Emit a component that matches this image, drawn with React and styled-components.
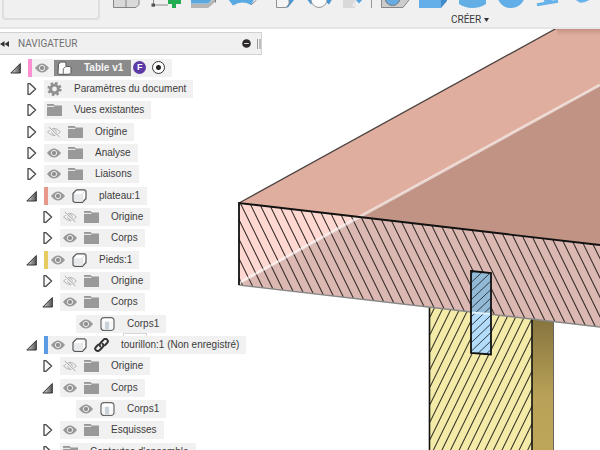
import React, { useState } from 'react';
import styled, { createGlobalStyle } from 'styled-components';

const GlobalStyle = createGlobalStyle`
    * {
        box-sizing: border-box;
    }

    body {
        margin: 0;
        background: #fff;
        font-family: "Liberation Sans", Arial, sans-serif;
    }

    button {
        padding: 0;
        border: 0;
        background: none;
        font: inherit;
        color: inherit;
    }

    svg {
        display: block;
    }
`;

const Page = styled.div`
    height: 100vh;
    display: flex;
    flex-direction: column;
    overflow: hidden;
`;

/* ---------- toolbar ---------- */

const Toolbar = styled.header`
    flex: none;
    display: flex;
    height: 29px;
    padding-left: 2px;
    overflow: hidden;
    background: #f0f0f0;
    border-bottom: 2px solid #e6e6e6;
`;

const Workspace = styled.button`
    flex: none;
    width: 98px;
    height: 20px;
    margin-right: 7px;
    border: 2px solid #dedede;
    border-top: 0;
    border-radius: 0 0 4px 4px;
`;

const ToolGroup = styled.div`
    flex: none;
`;

const Tools = styled.div`
    display: flex;
    height: 13px;
`;

const Tool = styled.button`
    width: 39px;
    height: 10px;
`;

const GroupLabel = styled.button`
    display: flex;
    align-items: center;
    gap: 3px;
    margin-left: 32px;
    font: 10px/13px Roboto, "Liberation Sans", sans-serif;
    color: #3a3a3a;
`;

/* ---------- viewport and browser ---------- */

const Viewport = styled.main`
    position: relative;
    flex: 1;
    min-height: 0;
    overflow: hidden;
`;

const Scene = styled.svg`
    position: absolute;
    inset: 0;
    width: 100%;
    height: 100%;
`;

const Navigator = styled.section`
    position: relative;
    width: 44%;
    min-width: 262px;
    padding-top: 3px;
`;

const NavHeader = styled.div`
    display: flex;
    align-items: center;
    height: 23px;
    margin-bottom: 2px;
    background: #f0f0f0;
    border: 1px solid #d2d2d2;
    border-left: 0;
    max-width: 262px;
`;

const NavTitle = styled.h1`
    flex: 1;
    margin: 0 0 0 8px;
    font: 10px/14px Roboto, "Liberation Sans", sans-serif;
    color: #707070;
`;

const Grip = styled.span`
    width: 4px;
    height: 10px;
    margin-left: 6px;
    border-left: 1px solid #9a9a9a;
    border-right: 2px solid #bdbdbd;
`;

const Tree = styled.ul`
    margin: 0;
    padding: 0;
    list-style: none;
`;

const Row = styled.li`
    display: flex;
    align-items: center;
    height: 21px;
    padding-left: ${p => 10 + p.$level * 16}px;

    &:nth-child(3n) {
        height: 22px;
    }
`;

const Twisty = styled.button`
    flex: none;
    width: 12px;
    height: 14px;
    margin-right: 6px;
`;

const Item = styled.div`
    position: relative;
    display: flex;
    align-items: center;
    gap: 7px;
    height: 18px;
    padding: 0 7px 0 3px;
    background: #f1f1f1;
    border-left: ${p => (p.$bar ? `4px solid ${p.$bar}` : '0')};
    white-space: nowrap;
`;

// edge of the popup that peeks out over a linked component
const PopupEdge = styled.span`
    position: absolute;
    top: -3px;
    left: 75px;
    width: 24px;
    height: 3px;
    border: 1px solid #d8d8d8;
    border-bottom: 0;
    background: #fff;
`;

const Eye = styled.button`
    width: 14px;
    height: 14px;
`;

const Name = styled.span`
    margin-left: 5px;
    font-size: 10px;
    line-height: 14px;
    color: #3c3c3c;
`;

const ActiveName = styled.span`
    display: flex;
    align-items: center;
    gap: 12px;
    height: 16px;
    margin: 0 -5px 0 -2px;
    padding: 0 8px 0 3px;
    background: #8b8b8b;
    font-size: 10px;
    font-weight: 700;
    color: #f4f4f4;
`;

const Badge = styled.span`
    width: 13px;
    height: 13px;
    border-radius: 50%;
    background: #5b3aa6;
    color: #fff;
    font-size: 9px;
    line-height: 13px;
    font-weight: 700;
    text-align: center;
`;

const Activate = styled.input`
    appearance: none;
    width: 13px;
    height: 13px;
    margin: 0 0 0 -1px;
    border: 1px solid #333;
    border-radius: 50%;
    background: radial-gradient(circle, #222 0 2px, #fff 3px);
`;

/* ---------- icons ---------- */

const EyeIcon = ({ off }) => (
    <svg width="14" height="14" viewBox="0 0 14 14" fill="none">
        {off ? (
            <g stroke="#b4b4b4">
                <path d="M.6 7Q7-.4 13.4 7Q7 14 .6 7Z" />
                <circle cx="7" cy="7" r="2.3" />
                <path d="M1.5 2 12.5 12.3" stroke="#f1f1f1" strokeWidth="2.4" />
                <path d="M1.8 2 12.5 12" stroke="#a8a8a8" />
            </g>
        ) : (
            <g>
                <path d="M0 7Q7-2.2 14 7Q7 16 0 7Z" fill="#999" />
                <circle cx="7" cy="7" r="2.6" stroke="#eee" fill="#8e8e8e" />
            </g>
        )}
    </svg>
);

const TwistyIcon = ({ open }) => (
    <svg width="12" height="14" viewBox="0 0 12 14">
        {open ? (
            <>
                <defs>
                    <linearGradient id="fold" x1="0" x2="1">
                        <stop offset="0" stopColor="#d8d8d8" />
                        <stop offset="1" stopColor="#555" />
                    </linearGradient>
                </defs>
                <path d="M.8 12 10.3 2.5V12Z" fill="url(#fold)" stroke="#333" />
            </>
        ) : (
            <path d="M2 1.6H3.7L9.6 7 3.7 12.4H2Z" fill="#fafafa" stroke="#484848" strokeWidth="1.3" strokeLinejoin="round" />
        )}
    </svg>
);

const kinds = {
    folder: (
        <>
            <path d="M0 1H6.5L8 2.6H15V13H0Z" fill="#999" />
            <path d="M0 3.4H7.4" stroke="#f1f1f1" />
        </>
    ),
    gear: (
        <>
            <circle cx="7.5" cy="7" r="5.9" fill="none" stroke="#909090" strokeWidth="2.4" strokeDasharray="2.4 2.23" />
            <circle cx="7.5" cy="7" r="3.9" fill="none" stroke="#909090" strokeWidth="3" />
        </>
    ),
    component: (
        <>
            <path d="M1 4.5 4.5.8H12.5L14 2V9.5L10.5 13.3H2.5L1 12Z" fill="#fff" stroke="#555" strokeWidth="1.2" strokeLinejoin="round" />
            <path d="M2 5H9.7V12.4H2.7L2 11.7Z" fill="#e6eaed" />
            <path d="M10.3 4.6 13.2 1.8M10.3 4.6V12.6" stroke="#ddd" />
        </>
    ),
    body: (
        <>
            <path d="M1 3Q1.5.7 4 .6H11Q13.6.7 14 3V11Q13.6 13.3 11 13.4H4Q1.5 13.3 1 11Z" fill="#fff" stroke="#666" strokeWidth="1.2" />
            <path d="M2 3.7Q7.5 5.5 13 3.7V11Q12.6 12.4 11 12.5H4Q2.3 12.4 2 11Z" fill="#f5f7f8" />
            <path d="M5 4.8H9V12.5H5Z" fill="#c9d2d9" />
        </>
    ),
    assembly: (
        <>
            <path d="M1.5 3.2 3.7 1H8L9 2V5.5H12.8L14 6.5V11.5L12.3 13.3H2L1 12.4Z" fill="#fafafa" stroke="#555" strokeLinejoin="round" />
            <path d="M6.3 13V7.8L8.3 5.7H10" fill="none" stroke="#777" />
        </>
    ),
    link: (
        <g fill="none" stroke="#333" strokeWidth="2" strokeLinecap="round">
            <path d="M6.2 8.4Q4.8 6.7 6.5 5L9.2 2.1Q11-.2 13 1.6T12.8 5.3L10.8 7.4" />
            <path d="M8.5 5.8Q10.2 7.3 8.5 9.2L5.8 12Q3.8 13.9 2 12.3T2.2 8.7L4.2 6.6" />
        </g>
    ),
};

const KindIcon = ({ kind }) => (
    <svg width="15" height="14" viewBox="0 0 15 14">{kinds[kind]}</svg>
);

const modifyTools = [
    ['Composant', <path d="M6.5-4V7.5H29L32 4.5V-4M19-4V7.5" fill="#d9d9d9" stroke="#858585" />],
    ['Esquisse', (
        <>
            <path d="M7.5-2V5H22" fill="none" stroke="#8b8b8b" />
            <path d="M5.5 3.5H9V6.7H5.5Z" fill="#555" />
            <path d="M26-3H30V0H35V4H30V8H26V4H22V0H26Z" fill="#22ad52" />
        </>
    )],
    ['Extrusion', (
        <>
            <path d="M6 3.5H23L30-2V2L23 8H6Z" fill="#b5b5b5" />
            <path d="M6-3H30L23 3.5H6Z" fill="#5ba8e0" />
            <path d="M30.5-2V2.5" stroke="#777" />
        </>
    )],
    ['Révolution', (
        <>
            <path d="M4-1 9 5.5Q18 0 27 5L31-2Z" fill="#5aa9e3" />
            <path d="M27 5 32.5 0" stroke="#888" />
        </>
    )],
    ['Perçage', (
        <>
            <path d="M7 0H14V-3H7Z" fill="#8dc3ec" />
            <path d="M22 7.5H25L31 0V-3H22Z" fill="#4795d2" />
            <path d="M13.5-3V7.5H23L26 4V-3" fill="#f4f4f4" stroke="#909090" />
        </>
    )],
    ['Congé', (
        <>
            <path d="M4-2 9 4.5 14-1ZM22 0 27 4.5 31-2Z" fill="#4798d5" />
            <circle cx="17" cy="-.5" r="8" fill="#fafafa" stroke="#999" />
        </>
    )],
    ['Aligner', (
        <>
            <path d="M2-2H14V8H2Z" fill="#d9d9d9" />
            <path d="M14-1H22L18 3.5Z" fill="#55a4df" />
            <path d="M15 8Q8 5 15 0Z" fill="#e8e8e8" />
            <path d="M30.5-2V8" stroke="#999" />
        </>
    )],
    ['Trou', (
        <>
            <path d="M1.5-3V7.5H23L29 0V-3Z" fill="#ccc" stroke="#888" />
            <circle cx="12.5" cy="-2" r="7.5" fill="#66abe2" stroke="#777" />
        </>
    )],
];

const createTools = [
    ['Boîte', (
        <>
            <path d="M0-3H22V8H0Z" fill="#64afe9" />
            <path d="M22 8 28 1V-4H22Z" fill="#428bc9" />
        </>
    )],
    ['Cylindre', <path d="M1-3H28V4Q22 8 14.5 8T1 4Z" fill="#64aee6" />],
    ['Sphère', <circle cx="14" cy="-6" r="14" fill="#62aee8" />],
    ['Spirale', <path d="M1 4.7 22 1.2M8 0 17 2" fill="none" stroke="#68b2ea" strokeWidth="3" />],
    ['Tuyau', <path d="M-1-3 5 1Q8 2 15-2" fill="none" stroke="#68b2ea" strokeWidth="3" />],
];

const ToolRow = ({ tools }) => (
    <Tools>
        {tools.map(([label, drawing]) => (
            <Tool key={label} aria-label={label}>
                <svg width="39" height="10" viewBox="0 0 39 10">{drawing}</svg>
            </Tool>
        ))}
    </Tools>
);

/* ---------- section view of the model ---------- */

// returns the path of count parallel lines, each shifted by step
const hatch = (x, y, dx, dy, stepX, stepY, count) =>
    Array.from({ length: count }, (_, i) => `M${x + i * stepX} ${y + i * stepY}l${dx} ${dy}`).join('');

const Model = () => (
    <Scene viewBox="0 29 600 421" preserveAspectRatio="xMaxYMin slice" aria-hidden="true">
        <defs>
            <clipPath id="front"><path d="M239 203 600 245V327L239 285Z" /></clipPath>
            <clipPath id="leg"><path d="M430 307 532 319V450H430Z" /></clipPath>
            <clipPath id="dowel"><path d="M471 271 491 273V354.5L471 353Z" /></clipPath>
            <linearGradient id="side" x1="0" y1="320" x2="0" y2="450" gradientUnits="userSpaceOnUse">
                <stop offset="0" stopColor="#87753f" />
                <stop offset=".6" stopColor="#b9a257" />
                <stop offset="1" stopColor="#bda65a" />
            </linearGradient>
            <linearGradient id="shade" x1="0" y1="28" x2="0" y2="38" gradientUnits="userSpaceOnUse">
                <stop offset="0" stopColor="#a9786a" stopOpacity=".7" />
                <stop offset="1" stopColor="#e0ae9f" stopOpacity="0" />
            </linearGradient>
        </defs>

        <path d="M532 318H553V450H532Z" fill="url(#side)" />
        <path d="M553.5 320V450" stroke="#666" />
        <path d="M430 306 532 318V450H430Z" fill="#f5eba9" />
        <g clipPath="url(#leg)">
            <path d={hatch(430, 317, 120, -245, 0, 17.5, 24)} stroke="#3c3a2e" strokeWidth="1.1" fill="none" />
        </g>
        <path d="M429.5 307V450M532 318V450" stroke="#111" strokeWidth="1.6" />

        <path d="M239 203 557 28H600V246Z" fill="#e0ae9f" />
        <path d="M557 28H600V38H557Z" fill="url(#shade)" />
        <path d="M359 217 600 85V246Z" fill="#c09385" />
        <path d="M239 203 600 245V327L239 285Z" fill="#ffd9d1" />
        <path d="M239 284 359 217 600 245V327Z" fill="#dbb8b1" />
        <g clipPath="url(#front)">
            <path d={hatch(135, 124, 130, 265, 9.5, 0, 56)} stroke="#3a302e" strokeWidth="1.1" fill="none" />
        </g>
        <path d="M239 283 600 85" stroke="#fff" strokeOpacity=".6" strokeWidth="2.8" />
        <path d="M239 203 557 28" stroke="#4b4340" strokeWidth="1.3" />
        <path d="M239 285 600 327" stroke="#888" strokeWidth="1.5" />
        <path d="M239 285V203L600 245" fill="none" stroke="#111" strokeWidth="1.8" />

        <path d="M471 271 491 273V354.5L471 353Z" fill="#b3ddfa" />
        <path d="M471 271 491 273V314L471 312Z" fill="#92b9d5" />
        <g clipPath="url(#dowel)">
            <path d={hatch(470, 275, 22, -21, 0, 8.6, 14)} stroke="#333f48" fill="none" />
        </g>
        <path d="M471 312.5 491 314" stroke="#dff1ff" strokeWidth="2" />
        <path d="M471 271 491 273V354.5L471 353Z" fill="none" stroke="#111" strokeWidth="1.8" />
    </Scene>
);

/* ---------- tree ---------- */

const items = [
    { level: 1, kind: 'gear', name: 'Paramètres du document' },
    { level: 1, kind: 'folder', name: 'Vues existantes' },
    { level: 1, eye: 'off', kind: 'folder', name: 'Origine' },
    { level: 1, eye: 'on', kind: 'folder', name: 'Analyse' },
    { level: 1, eye: 'on', kind: 'folder', name: 'Liaisons' },
    { level: 1, open: true, bar: '#e8988b', eye: 'on', kind: 'component', name: 'plateau:1' },
    { level: 2, eye: 'off', kind: 'folder', name: 'Origine' },
    { level: 2, eye: 'on', kind: 'folder', name: 'Corps' },
    { level: 1, open: true, bar: '#e6cc60', eye: 'on', kind: 'component', name: 'Pieds:1' },
    { level: 2, eye: 'off', kind: 'folder', name: 'Origine' },
    { level: 2, open: true, eye: 'on', kind: 'folder', name: 'Corps' },
    { level: 3, leaf: true, eye: 'on', kind: 'body', name: 'Corps1' },
    { level: 1, open: true, bar: '#5b9be4', eye: 'on', kind: 'component', linked: true, name: 'tourillon:1 (Non enregistré)' },
    { level: 2, eye: 'off', kind: 'folder', name: 'Origine' },
    { level: 2, open: true, eye: 'on', kind: 'folder', name: 'Corps' },
    { level: 3, leaf: true, eye: 'on', kind: 'body', name: 'Corps1' },
    { level: 2, eye: 'on', kind: 'folder', name: 'Esquisses' },
    { level: 2, kind: 'folder', name: "Contextes d'ensemble" },
];

const EyeToggle = ({ initial }) => {
    const [off, setOff] = useState(initial === 'off');

    return (
        <Eye aria-label="Visibilité" aria-pressed={!off} onClick={() => setOff(!off)}>
            <EyeIcon off={off} />
        </Eye>
    );
}

const TreeRow = ({ item }) => (
    <Row $level={item.level}>
        <Twisty as={item.leaf ? 'span' : 'button'} aria-label={item.leaf ? undefined : 'Développer'}>
            {!item.leaf && <TwistyIcon open={item.open} />}
        </Twisty>
        <Item $bar={item.bar}>
            {item.eye && <EyeToggle initial={item.eye} />}
            <KindIcon kind={item.kind} />
            {item.linked && <KindIcon kind="link" />}
            <Name>{item.name}</Name>
            {item.linked && <PopupEdge />}
        </Item>
    </Row>
);

const App = () => {
    return (
        <Page>
            <GlobalStyle />
            <Toolbar>
                <Workspace aria-label="Espace de travail" />
                <ToolGroup>
                    <ToolRow tools={modifyTools} />
                </ToolGroup>
                <ToolGroup>
                    <ToolRow tools={createTools} />
                    <GroupLabel>
                        CRÉER
                        <svg width="5" height="4" viewBox="0 0 5 4"><path d="M0 0H5L2.5 4Z" fill="#333" /></svg>
                    </GroupLabel>
                </ToolGroup>
            </Toolbar>
            <Viewport>
                <Model />
                <Navigator>
                    <NavHeader>
                        <button aria-label="Réduire">
                            <svg width="10" height="8" viewBox="0 0 10 8"><path d="M0 4 4.5 1V7ZM4.5 4 9 1V7Z" fill="#333" /></svg>
                        </button>
                        <NavTitle>NAVIGATEUR</NavTitle>
                        <button aria-label="Masquer">
                            <svg width="9" height="9" viewBox="0 0 9 9">
                                <circle cx="4.5" cy="4.5" r="4.3" fill="#2d2929" />
                                <path d="M2.2 4.5H6.8" stroke="#ddd" />
                            </svg>
                        </button>
                        <Grip />
                    </NavHeader>
                    <Tree>
                        <Row $level={0}>
                            <Twisty aria-label="Développer"><TwistyIcon open /></Twisty>
                            <Item $bar="#fb8fd0">
                                <EyeToggle initial="on" />
                                <ActiveName>
                                    <KindIcon kind="assembly" />
                                    Table v1
                                </ActiveName>
                                <Badge>F</Badge>
                                <Activate type="radio" aria-label="Activer Table v1" defaultChecked />
                            </Item>
                        </Row>
                        {items.map((item, i) => <TreeRow key={i} item={item} />)}
                    </Tree>
                </Navigator>
            </Viewport>
        </Page>
    );
}

export default App;
